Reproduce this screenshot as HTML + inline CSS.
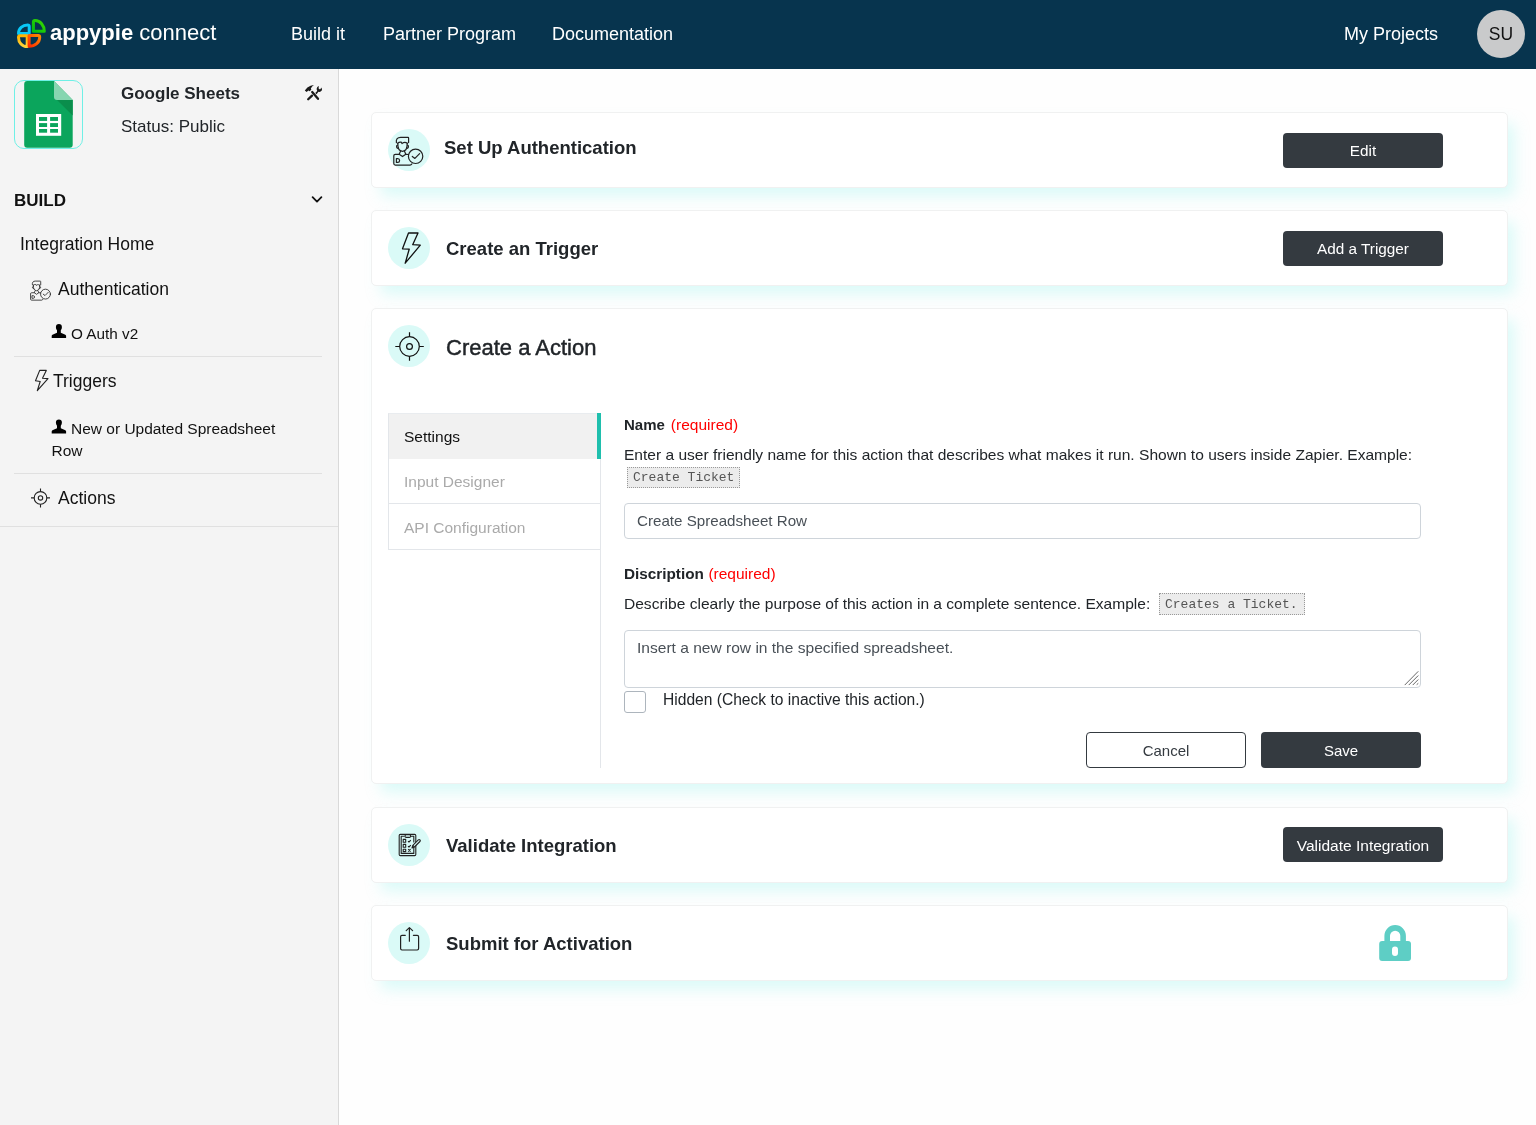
<!DOCTYPE html>
<html><head><meta charset="utf-8">
<style>
*{box-sizing:border-box;margin:0;padding:0}
html,body{width:1536px;height:1125px;overflow:hidden;background:#fefefe;font-family:"Liberation Sans",sans-serif;color:#212529}
.t{position:absolute;white-space:nowrap}
#hdr{position:absolute;left:0;top:0;width:1536px;height:69px;background:#07344e}
.nav{position:absolute;color:#fff;font-size:18px;line-height:20px;top:23.6px;white-space:nowrap}
#side{position:absolute;left:0;top:69px;width:339px;height:1056px;background:#f4f4f4;border-right:1px solid #d9d9d9}
.card{position:absolute;left:371px;width:1137px;height:76px;background:#fff;border:1px solid #f0f1f1;border-radius:5px;box-shadow:8px 10px 15px -2px rgba(150,243,236,0.34)}
.ic{position:absolute;left:16px;top:16px;width:42px;height:42px;border-radius:50%;background:#dafaf7}
.ttl{position:absolute;font-weight:700;font-size:18.5px;line-height:22px;color:#212529;white-space:nowrap}
.btn{position:absolute;left:911px;width:160px;height:35px;background:#343a40;border-radius:4px;color:#fff;font-size:15.3px;line-height:35px;text-align:center;white-space:nowrap}
.sd{color:#111}
.hr{position:absolute;height:1px;background:#e0e0e0}
.b15{font-size:15.5px;line-height:18px}
.b16{font-size:15.55px;line-height:18px}
</style></head><body style="will-change:transform">
<div id="hdr">
  <div class="t" style="left:50px;top:20px;color:#fff;font-size:22px;line-height:26px"><b>appypie</b> connect</div>
  <div class="nav" style="left:291px">Build it</div>
  <div class="nav" style="left:383px">Partner Program</div>
  <div class="nav" style="left:552px">Documentation</div>
  <div class="nav" style="left:1344px">My Projects</div>
  <div class="t" style="left:1477px;top:9.6px;width:48px;height:48px;border-radius:50%;background:#c9cacb;color:#111;font-size:17.5px;line-height:48px;text-align:center">SU</div>
</div>
<div id="side">
  <div class="t" style="left:14px;top:11px;width:69px;height:69px;border:1px solid #6ff0e6;border-radius:10px"></div>
  <div class="t sd" style="left:121px;top:15px;font-weight:700;font-size:17px;line-height:20px;color:#212529">Google Sheets</div>
  <div class="t sd" style="left:121px;top:48px;font-size:17px;line-height:20px;color:#212529">Status: Public</div>
  <div class="t sd" style="left:14px;top:122px;font-weight:700;font-size:17px;line-height:20px">BUILD</div>
  <div class="t sd" style="left:20px;top:165px;font-size:17.5px;line-height:20px">Integration Home</div>
  <div class="t sd" style="left:58px;top:210px;font-size:17.5px;line-height:20px">Authentication</div>
  <div class="t sd" style="left:71px;top:256px;font-size:15.3px;line-height:18px">O Auth v2</div>
  <div class="hr" style="left:14px;top:287px;width:308px"></div>
  <div class="t sd" style="left:53px;top:302px;font-size:17.5px;line-height:20px">Triggers</div>
  <div class="t sd" style="left:71px;top:351px;font-size:15.5px;line-height:18px">New or Updated Spreadsheet</div>
  <div class="t sd" style="left:51.5px;top:373px;font-size:15.5px;line-height:18px">Row</div>
  <div class="hr" style="left:14px;top:404px;width:308px"></div>
  <div class="t sd" style="left:58px;top:419px;font-size:17.5px;line-height:20px">Actions</div>
  <div class="hr" style="left:0px;top:457px;width:338px"></div>
</div>

<div class="card" style="top:112px">
  <div class="ic"></div>
  <div class="ttl" style="left:72px;top:24px">Set Up Authentication</div>
  <div class="btn" style="top:20px">Edit</div>
</div>
<div class="card" style="top:210px">
  <div class="ic"></div>
  <div class="ttl" style="left:74px;top:27px">Create an Trigger</div>
  <div class="btn" style="top:20px">Add a Trigger</div>
</div>
<div class="card" style="top:308px;height:476px">
  <div class="ic"></div>
  <div class="t" style="left:74px;top:26px;font-size:22px;line-height:26px;-webkit-text-stroke:0.45px #212529">Create a Action</div>
  <div class="t" style="left:16px;top:104px;width:213px;height:46px;background:#f1f1f1;border-left:1px solid #e3e6ea;border-top:1px solid #e9ecef"></div>
  <div class="t" style="left:225px;top:104px;width:4px;height:46px;background:#1fbfad"></div>
  <div class="t" style="left:16px;top:150px;width:213px;height:45px;border:1px solid #e3e6ea;border-top:0;border-right:0"></div>
  <div class="t" style="left:16px;top:195px;width:213px;height:46px;border:1px solid #e3e6ea;border-top:0;border-right:0"></div>
  <div class="t" style="left:228px;top:150px;width:1px;height:309px;background:#e3e6ea"></div>
  <div class="t b15" style="left:32px;top:119px;color:#111">Settings</div>
  <div class="t b15" style="left:32px;top:164px;color:#aaa">Input Designer</div>
  <div class="t b15" style="left:32px;top:210px;color:#aaa">API Configuration</div>

  <div class="t" style="left:252px;top:107px;font-size:15px;line-height:18px"><b>Name</b><span style="color:#f00;font-size:15.5px;margin-left:6px">(required)</span></div>
  <div class="t b16" style="left:252px;top:137px">Enter a user friendly name for this action that describes what makes it run. Shown to users inside Zapier. Example:</div>
  <div class="t" style="left:255px;top:158px;width:113px;height:21px;background:#ececec;border:1px dotted #999;font-family:'Liberation Mono',monospace;font-size:13px;line-height:19px;color:#555;padding-left:5px">Create Ticket</div>
  <div class="t" style="left:252px;top:194px;width:797px;height:36px;border:1px solid #ced4da;border-radius:4px;font-size:15.15px;line-height:34px;color:#495057;padding-left:12px">Create Spreadsheet Row</div>
  <div class="t" style="left:252px;top:256px;font-size:15px;line-height:18px"><b style="font-size:15.3px">Discription</b><span style="color:#f00;font-size:15.5px;margin-left:4.5px">(required)</span></div>
  <div class="t b16" style="left:252px;top:286px">Describe clearly the purpose of this action in a complete sentence. Example:</div>
  <div class="t" style="left:787px;top:284px;width:146px;height:22px;background:#ececec;border:1px dotted #999;font-family:'Liberation Mono',monospace;font-size:13px;line-height:22px;color:#555;padding-left:5px">Creates a Ticket.</div>
  <div class="t" style="left:252px;top:321px;width:797px;height:58px;border:1px solid #ced4da;border-radius:4px;font-size:15.55px;line-height:18px;color:#495057;padding:8px 12px">Insert a new row in the specified spreadsheet.</div>
  <div class="t" style="left:252px;top:382px;width:22px;height:22px;border:1px solid #adb5bd;border-radius:3px;background:#fff"></div>
  <div class="t b15" style="left:291px;top:382px;font-size:15.6px">Hidden (Check to inactive this action.)</div>
  <div class="t" style="left:714px;top:423px;width:160px;height:36px;border:1px solid #343a40;border-radius:4px;font-size:15px;line-height:36px;text-align:center;color:#343a40">Cancel</div>
  <div class="t" style="left:889px;top:423px;width:160px;height:36px;background:#343a40;border-radius:4px;font-size:15px;line-height:37px;text-align:center;color:#fff">Save</div>
</div>
<div class="card" style="top:807px">
  <div class="ic"></div>
  <div class="ttl" style="left:74px;top:27px">Validate Integration</div>
  <div class="btn" style="top:19px;font-size:15.5px;line-height:37px">Validate Integration</div>
</div>
<div class="card" style="top:905px">
  <div class="ic"></div>
  <div class="ttl" style="left:74px;top:27px">Submit for Activation</div>
</div>

<svg style="position:absolute;left:0;top:0" width="1536" height="1125" viewBox="0 0 1536 1125">
  <defs>
    <g id="auth" fill="none" stroke="#222" stroke-width="1.2" stroke-linecap="round" stroke-linejoin="round">
      <path d="M8.4 12.6 C7.8 9.2 9.6 7.3 12.6 7.3 L20 7.3 Q20.6 7.3 20.6 8 L20.6 12.6"/>
      <path d="M9.6 13.4 Q11.2 11.8 13.3 12.2 L14 13.6 L15.6 12.6 Q17.6 12 19.4 13.4"/>
      <path d="M9.8 13.2 C9.6 18 11.2 21 14.5 21.3 C17.8 21 19.4 18 19.2 13.2"/>
      <path d="M9.7 15 Q8.1 15.6 8.6 17 Q9 18.2 10 18.4"/>
      <path d="M19.3 15 Q20.9 15.6 20.4 17 Q20 18.2 19 18.4"/>
      <path d="M12.4 21.4 L11.2 24.2 L14.5 26.6 L17.8 24.2 L16.6 21.4"/>
      <path d="M11.2 24.3 L7.3 24.3 Q5.8 24.3 5.8 25.8 L5.8 33.6 Q5.8 35.1 7.3 35.1 L22 35.1 Q23.2 35.1 23.8 34"/>
      <path d="M17.8 24.3 L20.6 24.5"/>
      <path d="M8.4 28.6 L9.8 28.6 Q11.6 28.6 11.6 30.5 Q11.6 32.4 9.8 32.4 L8.4 32.4 Z"/>
      <circle cx="27.6" cy="26.3" r="7.2"/>
      <path d="M24.3 26.4 L26.9 28.4 L31.6 23.6"/>
    </g>
    <path id="person" d="M5.7 20 L5.7 17.8 Q5.9 17 7 16.5 L11 14.8 L11 12.3 Q9.9 11.2 9.9 9.2 Q9.9 6 12.9 6 Q15.9 6 15.9 9.2 Q15.9 11.2 14.8 12.3 L14.8 14.8 L18.8 16.5 Q19.9 17 20.1 17.8 L20.1 20 Z" fill="#000"/>
  </defs>
  <!-- logo -->
  <defs>
    <linearGradient id="gy" x1="0" y1="0" x2="0" y2="1"><stop offset="0" stop-color="#ffb300"/><stop offset="1" stop-color="#ffd23a"/></linearGradient>
    <linearGradient id="go" x1="1" y1="0" x2="0" y2="1"><stop offset="0" stop-color="#ff8a00"/><stop offset="1" stop-color="#ff2a00"/></linearGradient>
    <linearGradient id="gg" x1="1" y1="0" x2="0" y2="1"><stop offset="0" stop-color="#3cd800"/><stop offset="1" stop-color="#00bf10"/></linearGradient>
  </defs>
  <g fill="none" stroke-width="3" stroke-linejoin="round">
    <path d="M18.5 33.6 C18.5 28.5 22.5 25.1 27.6 25.1 Q29.2 25.1 29.2 26.8 L29.2 33.6 Z" stroke="#08c8f8"/>
    <path d="M33.4 31.3 L33.4 22.1 Q33.4 20.5 35 20.5 C40.2 20.5 44.3 25.5 44.3 31.3 Z" stroke="url(#gg)"/>
    <path d="M27.2 35.8 L20.1 35.8 Q18.5 35.8 18.5 37.4 C18.5 42.6 22.2 46.6 27.2 46.6 Z" stroke="url(#gy)"/>
    <path d="M29.1 35.6 L38.1 35.6 Q39.7 35.6 39.7 37.2 C39.7 42.2 35.2 46.3 29.1 46.3 Z" stroke="url(#go)"/>
  </g>
  <!-- sheets icon -->
  <path d="M27.2 80.9 L54 80.9 L72.7 99.9 L72.7 144.8 Q72.7 147.8 69.7 147.8 L27.2 147.8 Q24.2 147.8 24.2 144.8 L24.2 83.9 Q24.2 80.9 27.2 80.9 Z" fill="#0ba55c"/>
  <path d="M54 80.9 L72.7 99.9 L57 99.9 Q54 99.9 54 96.9 Z" fill="#86d6b0"/>
  <path d="M57 99.9 L72.7 99.9 L72.7 115.6 Z" fill="#0a8e4c"/>
  <rect x="36" y="114" width="25.2" height="21.8" fill="#fff"/>
  <g fill="#0ba55c">
    <rect x="39" y="117" width="8.1" height="3.9"/><rect x="50.1" y="117" width="7.9" height="3.9"/>
    <rect x="39" y="123.1" width="8.1" height="3.9"/><rect x="50.1" y="123.1" width="7.9" height="3.9"/>
    <rect x="39" y="129" width="8.1" height="3.7"/><rect x="50.1" y="129" width="7.9" height="3.7"/>
  </g>
  <!-- tools icon -->
  <g transform="translate(298 80)" fill="#1a1a1a">
    <line x1="14.2" y1="12" x2="20" y2="18.8" stroke="#1a1a1a" stroke-width="2.3" stroke-linecap="round"/>
    <line x1="10.2" y1="19.3" x2="14" y2="15.6" stroke="#1a1a1a" stroke-width="2.3" stroke-linecap="round"/>
    <path d="M6.8 10.6 L8.6 12.1 L10.4 10.4 L11.8 11.2 L13.4 9.6 L12.8 8.4 Q14 6.2 15.9 5 Q12.4 5.2 9.4 7.6 Z"/>
    <path d="M17.2 12.9 L19.2 10.9 Q18 9 19.2 7.2 Q19.9 6.4 20.8 6.1 L20.6 8.4 L22 9.4 L23.6 7.4 Q24.5 9.6 23.2 11 Q22 12.2 20.4 11.8 L18.6 14.2 Z"/>
  </g>
  <!-- chevron -->
  <path d="M312.6 197.2 L317 201.6 L321.4 197.2" fill="none" stroke="#111" stroke-width="1.8" stroke-linecap="round" stroke-linejoin="round"/>
  <!-- sidebar icons -->
  <use href="#auth" transform="translate(26.6 276.1) scale(0.685)"/>
  <use href="#person" transform="translate(46 318)"/>
  <use href="#person" transform="translate(46 413.4)"/>
  <g transform="translate(28 364)"><path d="M11.7 6.4 L18.3 6.4 L14.5 14.3 L20 14.6 L9.3 26.6 L12.2 17.5 L7.5 16.8 Z" fill="none" stroke="#222" stroke-width="1.1" stroke-linejoin="round"/></g>
  <g transform="translate(26 484)" fill="none" stroke="#222" stroke-width="1.1">
    <circle cx="14.5" cy="13.9" r="6.3"/><circle cx="14.5" cy="13.9" r="2.2"/>
    <path d="M14.5 4.4 V7.6 M14.5 20.2 V23.4 M5 13.9 H8.2 M20.8 13.9 H24"/>
  </g>
  <!-- card icons -->
  <use href="#auth" transform="translate(388 130)"/>
  <g transform="translate(388 228)"><path d="M20.5 5 L30 5 L24.7 16.7 L32.3 17.2 L17.2 35.2 L21.2 21.2 L14.5 20.8 Z" fill="none" stroke="#111" stroke-width="1.3" stroke-linejoin="round"/></g>
  <g transform="translate(388 326)" fill="none" stroke="#111" stroke-width="1.2">
    <circle cx="21.5" cy="20.5" r="9.8"/><circle cx="21.5" cy="20.5" r="2.9"/>
    <path d="M21.5 6.2 V10.6 M21.5 30.4 V34.8 M7.3 20.5 H11.7 M31.3 20.5 H35.8"/>
  </g>
  <g transform="translate(388 824)" fill="none" stroke="#222" stroke-width="1.1" stroke-linejoin="round">
    <rect x="11.2" y="10.4" width="16.6" height="21.2" rx="1.2"/>
    <path d="M16.6 12.2 L13.2 12.2 L13.2 29.4 L25.8 29.4 L25.8 22.5 M25.8 18.5 L25.8 12.2 L22.6 12.2"/>
    <rect x="17" y="10.8" width="5.6" height="2.6" rx="1.2"/>
    <rect x="15.2" y="15.4" width="2.5" height="2.8"/>
    <rect x="15.2" y="20.4" width="2.5" height="2.8"/>
    <rect x="15.2" y="25.2" width="2.5" height="2.4"/>
    <path d="M20 17.2 L21 18 L22.8 16.2 M20 22.2 L21 23 L22.8 21.2 M20.2 25.2 L22.6 27.6 M22.6 25.2 L20.2 27.6"/>
    <path d="M24 24 L24.8 21.4 L30.3 15.9 Q31.1 15.1 31.9 15.9 Q32.7 16.7 31.9 17.5 L26.4 23 Z" fill="#dbf8f6"/><path d="M24.9 21.5 L26.3 22.9"/>
  </g>
  <g transform="translate(388 922)" fill="none" stroke="#222" stroke-width="1.2" stroke-linecap="round">
    <path d="M17.3 13.3 L14 13.3 Q12.6 13.3 12.6 14.7 L12.6 26.6 Q12.6 28 14 28 L29.2 28 Q30.6 28 30.6 26.6 L30.6 14.7 Q30.6 13.3 29.2 13.3 L25.4 13.3"/>
    <path d="M21.4 5.9 V19.2 M18.2 8.6 L21.4 5.6 L24.6 8.6" stroke-linejoin="round"/>
  </g>
  <g stroke="#555" stroke-width="0.9" stroke-linecap="round">
    <path d="M1405 684.8 L1418 671.6 M1409 684.8 L1418 675.8 M1413 684.8 L1418 679.8 M1417 684.4 L1418 683.6"/>
  </g>
  <!-- lock -->
  <g transform="translate(1370 918)">
    <path d="M17.2 23.5 V17.8 A7.95 7.95 0 0 1 33.1 17.8 V23.5" fill="none" stroke="#5ecec5" stroke-width="5.6"/>
    <rect x="9.2" y="23" width="31.8" height="20" rx="3" fill="#5ecec5"/>
    <rect x="22" y="28.5" width="6" height="9.5" rx="3" fill="#fff"/>
  </g>
</svg>
</body></html>
